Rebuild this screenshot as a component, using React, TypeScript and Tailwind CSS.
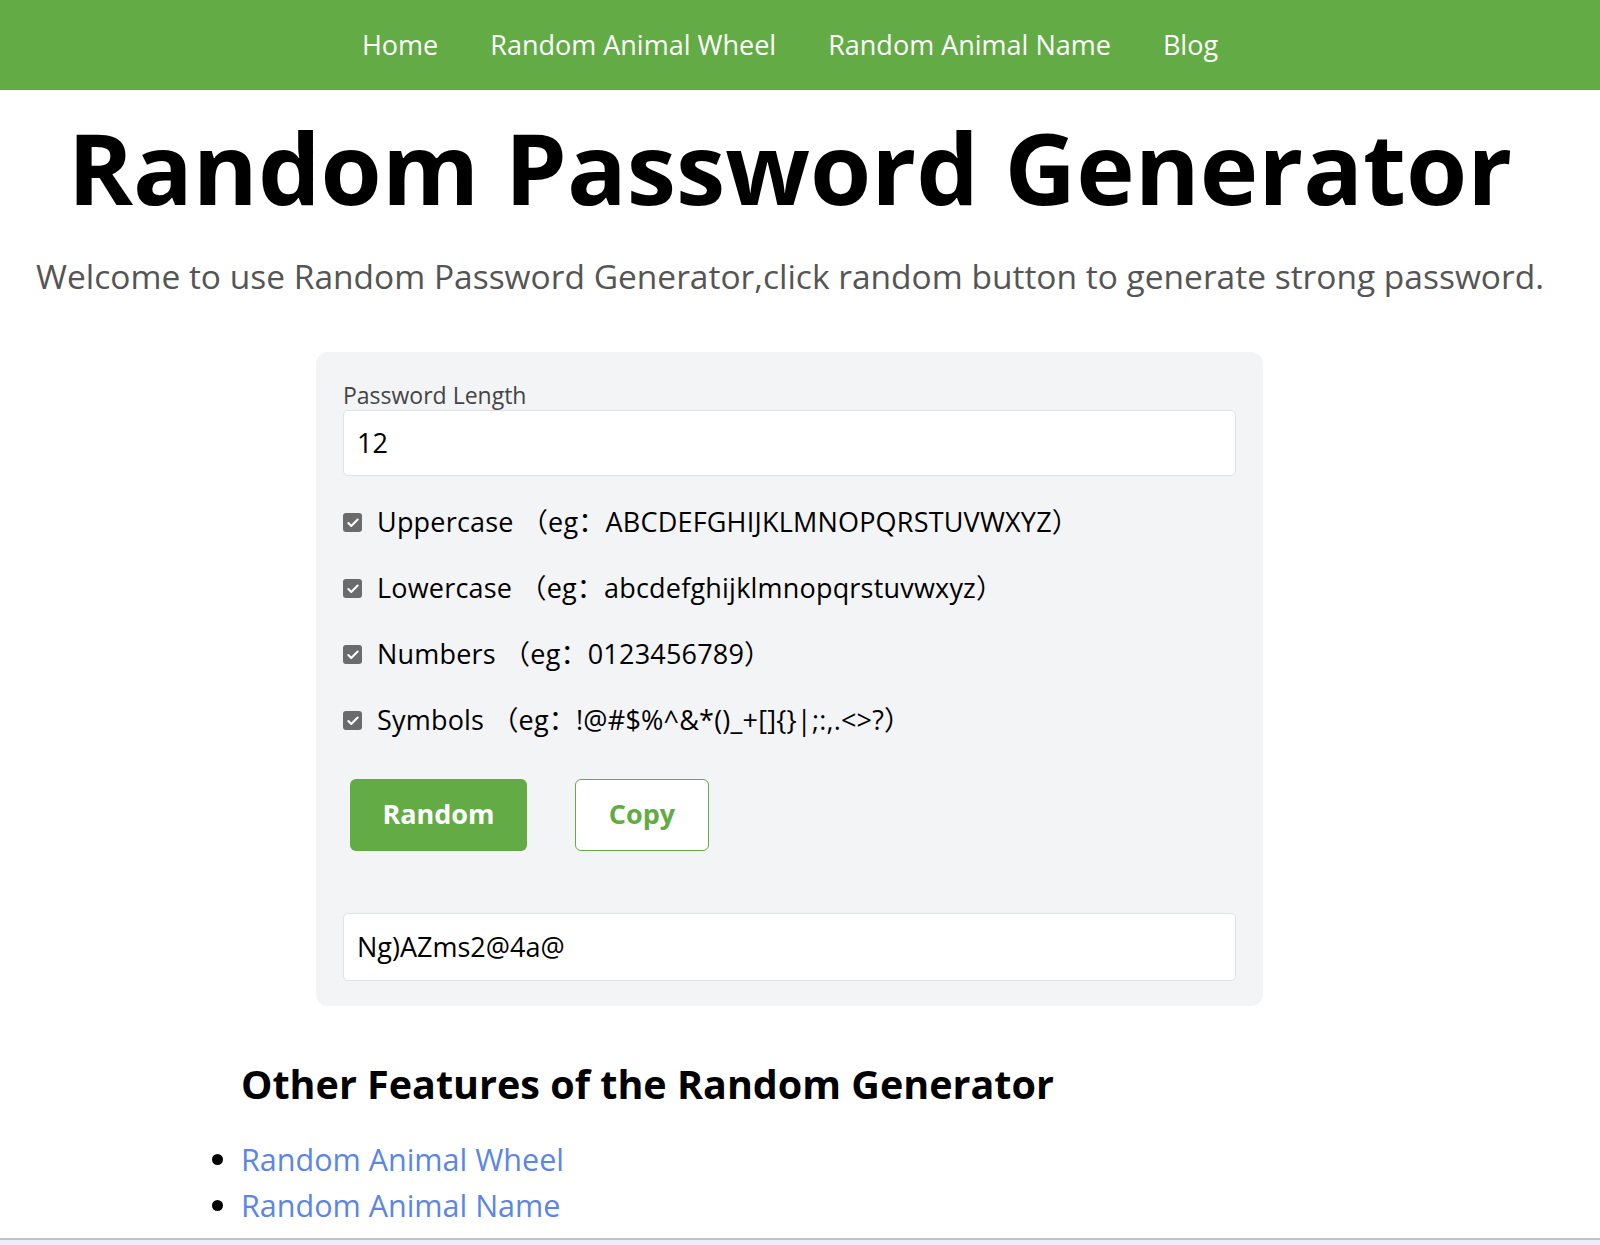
import { Check } from 'lucide-react'

const NAV_LINKS = ['Home', 'Random Animal Wheel', 'Random Animal Name', 'Blog']

const OPTIONS = [
  { label: 'Uppercase', sample: 'ABCDEFGHIJKLMNOPQRSTUVWXYZ' },
  { label: 'Lowercase', sample: 'abcdefghijklmnopqrstuvwxyz' },
  { label: 'Numbers', sample: '0123456789' },
  { label: 'Symbols', sample: '!@#$%^&*()_+[]{}|;:,.<>?' },
]

const FEATURES = ['Random Animal Wheel', 'Random Animal Name']

function Checkbox() {
  return (
    <span className="flex-shrink-0 w-[19px] h-[19px] rounded-[3px] bg-[#6b6b6b] flex items-center justify-center">
      <Check className="w-[14px] h-[14px] text-white" strokeWidth={3.5} />
    </span>
  )
}

export default function App() {
  return (
    <div className="min-h-[1245px] bg-white text-black font-['Open_Sans','Noto_Sans_CJK_SC',sans-serif]">
      {/* Nav */}
      <nav className="h-[90px] bg-[#63ab45]">
        <div className="w-[1580px] h-full flex items-center justify-center gap-[52px]">
          {NAV_LINKS.map(link => (
            <a key={link} href="#" className="text-[27px] text-white">
              {link}
            </a>
          ))}
        </div>
      </nav>

      <main className="w-[1580px]">
        <h1 className="mt-[27px] text-center text-[99px] font-bold leading-none">
          Random Password Generator
        </h1>
        <p className="mt-[44px] text-center text-[33.5px] leading-none text-[#555555]">
          Welcome to use Random Password Generator,click random button to generate strong password.
        </p>

        {/* Generator card */}
        <div className="mt-[58px] ml-[316px] w-[947px] rounded-[12px] bg-[#f3f4f6] px-[27px] pt-[28px] pb-[25px]">
          <label className="block text-[23px] leading-[30px] text-[#444444]">Password Length</label>
          <input
            type="text"
            defaultValue="12"
            className="block w-full h-[66px] rounded-[5px] border border-[#dfe2e6] bg-white px-[13px] text-[27px] text-black outline-none"
          />

          <div className="mt-[14px] flex flex-col">
            {OPTIONS.map(opt => (
              <label key={opt.label} className="flex h-[66px] items-center gap-[15px] text-[27px] text-black">
                <Checkbox />
                <span className="tracking-[0.2px]">
                  {opt.label} {'（eg：'}
                  {opt.sample}
                  {'）'}
                </span>
              </label>
            ))}
          </div>

          <div className="mt-[25px] flex items-center gap-[48px] pl-[7px]">
            <button className="w-[177px] h-[72px] rounded-[6px] bg-[#63ab45] text-[27px] font-bold text-white">
              Random
            </button>
            <button className="w-[134px] h-[72px] rounded-[6px] border border-[#63ab45] bg-white text-[27px] font-bold text-[#63ab45]">
              Copy
            </button>
          </div>

          <input
            type="text"
            readOnly
            value="Ng)AZms2@4a@"
            className="mt-[62px] block w-full h-[68px] rounded-[5px] border border-[#dfe2e6] bg-white px-[13px] text-[27px] text-black outline-none"
          />
        </div>

        {/* Other features */}
        <section className="ml-[241px] mt-[59px]">
          <h2 className="text-[39.5px] font-bold leading-none">Other Features of the Random Generator</h2>
          <ul className="mt-[32px] list-disc">
            {FEATURES.map(f => (
              <li key={f} className="text-[30.5px] leading-[46px] marker:text-black">
                <a href="#" className="text-[#5b86e5]">
                  {f}
                </a>
              </li>
            ))}
          </ul>
        </section>
      </main>

      <div className="fixed left-0 right-0 bottom-0 h-[7px] border-t-2 border-[#c3c3c3] bg-[#e9eef9]" />
    </div>
  )
}
